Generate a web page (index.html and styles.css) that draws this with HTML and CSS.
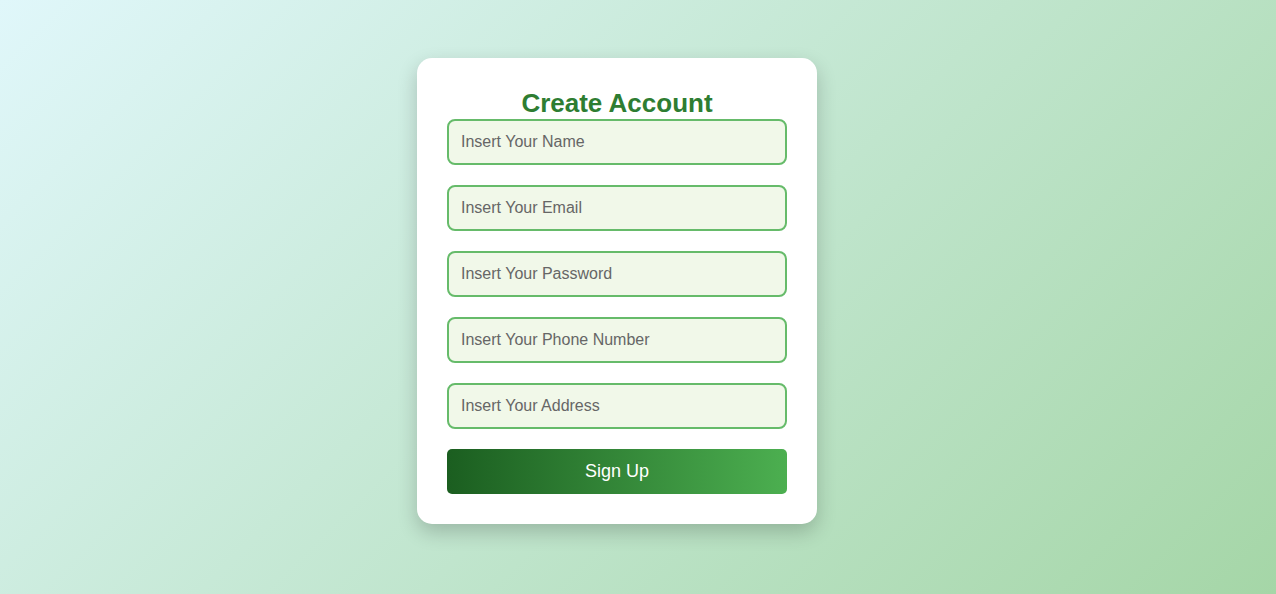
FILE: index.html
```html
<!DOCTYPE html>
<html lang="en">
<head>
<meta charset="utf-8">
<title>Create Account</title>
<link rel="stylesheet" href="styles.css">
</head>
<body>
<main class="page">
  <form class="card">
    <h2 class="title">Create Account</h2>
    <input class="field" type="text" placeholder="Insert Your Name">
    <input class="field" type="email" placeholder="Insert Your Email">
    <input class="field" type="password" placeholder="Insert Your Password">
    <input class="field" type="tel" placeholder="Insert Your Phone Number">
    <input class="field" type="text" placeholder="Insert Your Address">
    <button class="submit" type="button">Sign Up</button>
  </form>
</main>
</body>
</html>
```
FILE: styles.css
```css
* { box-sizing: border-box; }
html, body { margin: 0; height: 100%; }
body {
  font-family: "Liberation Sans", Arial, sans-serif;
  background: linear-gradient(135deg, #e0f7fa 0%, #a5d6a7 100%);
}
.page {
  min-height: 100vh;
  display: flex;
  justify-content: center;
  align-items: center;
  padding: 0 42px 13px 0;
}
.card {
  width: 400px;
  background: #fff;
  border-radius: 15px;
  padding: 30px;
  box-shadow: 0 8px 20px rgba(0, 0, 0, 0.2);
  display: flex;
  flex-direction: column;
}
.title {
  margin: 0;
  font-size: 26px;
  font-weight: bold;
  color: #2e7d32;
  text-align: center;
}
.field {
  width: 100%;
  height: 46px;
  margin-bottom: 20px;
  padding: 0 12px;
  border: 2px solid #66bb6a;
  border-radius: 8px;
  background: #f1f8e9;
  font-family: inherit;
  font-size: 16px;
  color: #333;
  outline: none;
}
.field::placeholder { color: #666; }
.submit {
  width: 100%;
  height: 45px;
  border: none;
  border-radius: 5px;
  background: linear-gradient(90deg, #1b5e20 0%, #4caf50 100%);
  color: #fff;
  font-family: inherit;
  font-size: 18px;
  cursor: pointer;
}
```
